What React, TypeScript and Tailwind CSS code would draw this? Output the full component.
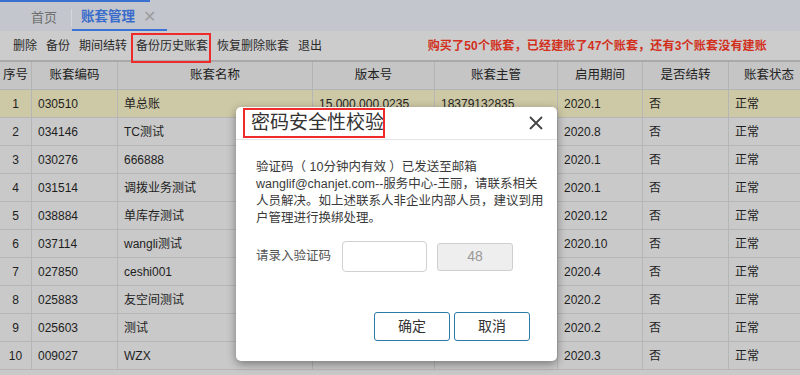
import React from "react";

const rows = [
  ["1", "030510", "单总账", "15.000.000.0235", "18379132835", "2020.1", "否", "正常"],
  ["2", "034146", "TC测试", "", "", "2020.8", "否", "正常"],
  ["3", "030276", "666888", "", "", "2020.1", "否", "正常"],
  ["4", "031514", "调拨业务测试", "", "", "2020.1", "否", "正常"],
  ["5", "038884", "单库存测试", "", "", "2020.12", "否", "正常"],
  ["6", "037114", "wangli测试", "", "", "2020.10", "否", "正常"],
  ["7", "027850", "ceshi001", "", "", "2020.4", "否", "正常"],
  ["8", "025883", "友空间测试", "", "", "2020.2", "否", "正常"],
  ["9", "025603", "测试", "", "", "2020.2", "否", "正常"],
  ["10", "009027", "WZX", "15.000.000.0235", "18770655713", "2020.3", "否", "正常"],
];

const headers = ["序号", "账套编码", "账套名称", "版本号", "账套主管", "启用期间", "是否结转", "账套状态"];

const font = { fontFamily: '"Liberation Sans", "Noto Sans CJK SC", sans-serif' };

export default function App() {
  return (
    <div className="relative w-[800px] h-[375px] overflow-hidden bg-[#c9c9c9] text-[#1e1e1e]" style={font}>
      {/* tab bar */}
      <div className="relative h-[31px] bg-[#c3c6cc] flex items-end">
        <div className="absolute left-0 top-0 w-[150px] h-[2px] bg-[#3b6fd0]" />
        <div className="flex items-center h-[31px] pl-[31px]">
          <span className="text-[13px] text-[#707070] pt-[4px]">首页</span>
          <span className="ml-[14px] w-px h-[18px] bg-[#d4d6da] mt-[4px]" />
          <div className="ml-0 h-[31px] w-[95px] flex items-center pl-[9px] border-b-[2px] border-[#3a72d6] pt-[5px]">
            <span className="text-[13.5px] font-bold text-[#3a6ccc]">账套管理</span>
            <span className="ml-[8px] text-[#9a9da2] text-[16px] leading-none">✕</span>
          </div>
        </div>
      </div>

      {/* toolbar */}
      <div className="relative h-[31px] bg-[#cccccc] flex items-center pl-[13px] text-[12px] text-[#2a2a2a] border-b-[2px] border-[#a9a9a9]">
        <div className="flex gap-[9px]">
          <span>删除</span>
          <span>备份</span>
          <span>期间结转</span>
          <span>备份历史账套</span>
          <span>恢复删除账套</span>
          <span>退出</span>
        </div>
        <span className="ml-auto pr-[33px] text-[12px] font-bold text-[#d2301c] tracking-[0.2px]">
          购买了50个账套，已经建账了47个账套，还有3个账套没有建账
        </span>
        <div className="absolute left-[131px] top-[2px] w-[80px] h-[30px] border-2 border-[#ee2a2a]" />
      </div>

      {/* table */}
      <div className="grid grid-cols-[32px_86px_195px_122px_123px_85px_86px_81px] text-[12px]">
        {headers.map((h) => (
          <div
            key={h}
            className="h-[28px] flex items-center justify-center bg-[#c5c5c5] border-r border-b border-[#b3b3b3] text-[12.5px] text-[#222]"
          >
            {h}
          </div>
        ))}
        {rows.map((r, i) =>
          r.map((c, j) => (
            <div
              key={i + "-" + j}
              className={
                "h-[28px] flex items-center border-r border-b border-[#b6b6b6] whitespace-nowrap overflow-hidden " +
                (i === 0 ? "bg-[#cdc8a5] " : "bg-[#c9c9c9] ") +
                (j === 0 ? "justify-center" : "pl-[6px]")
              }
            >
              {c}
            </div>
          ))
        )}
      </div>

      {/* dialog */}
      <div className="absolute left-[236px] top-[107px] w-[321px] h-[254px] bg-white rounded-[5px] shadow-[0_3px_10px_rgba(0,0,0,0.4)] flex flex-col">
        <div className="relative h-[33px] border-b border-[#e6e6e6] flex items-center pl-[15px] pr-[14px]">
          <span className="text-[19px] text-[#333]">密码安全性校验</span>
          <svg className="ml-auto" width="14" height="14" viewBox="0 0 14 14">
            <path d="M1 1 L13 13 M13 1 L1 13" stroke="#444" strokeWidth="1.8" />
          </svg>
          <div className="absolute left-[7px] top-[1px] w-[142px] h-[30px] border-2 border-[#ef2b2b]" />
        </div>
        <div className="pl-[20px] pt-[19px] text-[12.5px] leading-[17px] text-[#3a3a3a] whitespace-nowrap">
          <div>验证码（ 10分钟内有效 ）已发送至邮箱</div>
          <div>wanglif@chanjet.com--服务中心-王丽，请联系相关</div>
          <div>人员解决。如上述联系人非企业内部人员，建议到用</div>
          <div>户管理进行换绑处理。</div>
        </div>
        <div className="flex items-center pl-[20px] mt-[14px]">
          <span className="text-[12.5px] text-[#555]">请录入验证码</span>
          <div className="ml-[11px] w-[85px] h-[31px] border border-[#d0d0d0] rounded-[4px] bg-white" />
          <div className="ml-[10px] w-[76px] h-[28px] border border-[#cfcfcf] rounded-[3px] bg-[#eeeeee] flex items-center justify-center text-[14px] text-[#999]">
            48
          </div>
        </div>
        <div className="flex justify-end gap-[4px] pr-[27px] mt-[40px]">
          <div className="w-[76px] h-[29px] border-[1.5px] border-[#2b7aa8] rounded-[3px] flex items-center justify-center text-[14px] text-[#333]">
            确定
          </div>
          <div className="w-[76px] h-[29px] border-[1.5px] border-[#2b7aa8] rounded-[3px] flex items-center justify-center text-[14px] text-[#333]">
            取消
          </div>
        </div>
      </div>
    </div>
  );
}
